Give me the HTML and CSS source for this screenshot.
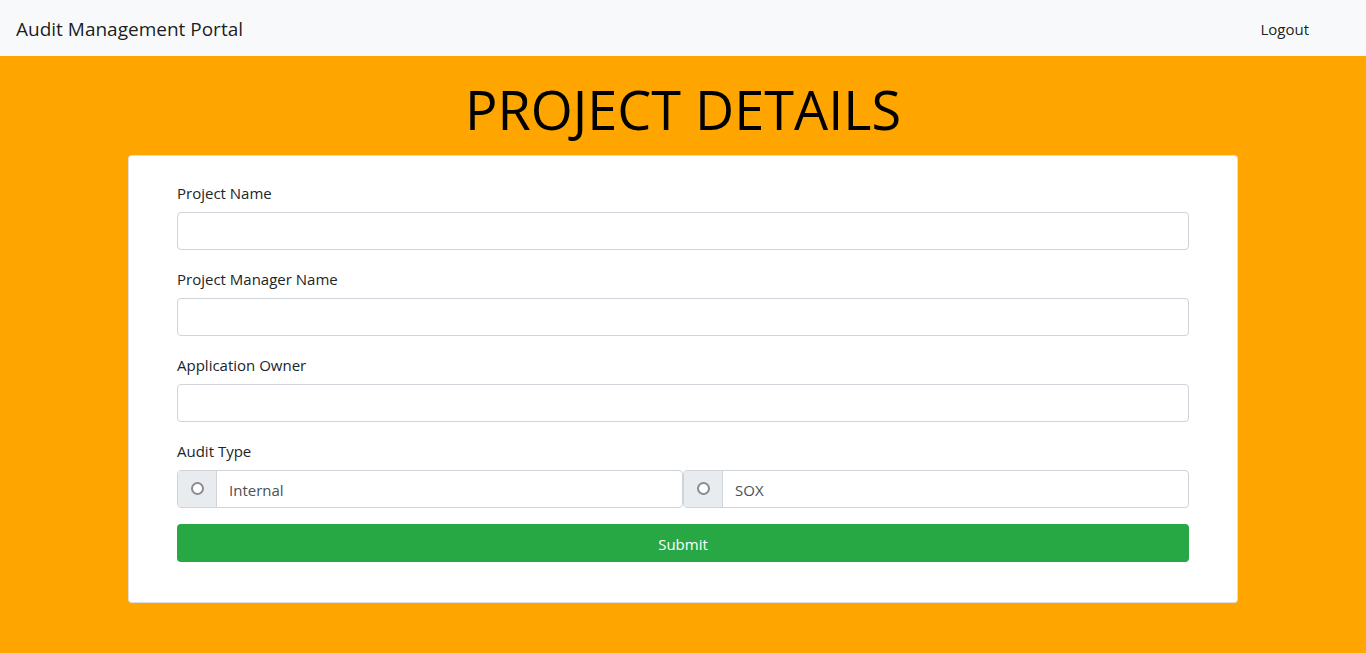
FILE: index.html
```html
<!DOCTYPE html>
<html lang="en">
<head>
<meta charset="utf-8">
<title>Audit Management Portal</title>
<link rel="stylesheet" href="styles.css">
</head>
<body>
<nav class="navbar">
  <a class="brand" href="#">Audit Management Portal</a>
  <a class="nav-link" href="#">Logout</a>
</nav>
<main class="page">
  <h1 class="title">PROJECT DETAILS</h1>
  <div class="card">
    <form class="form">
      <div class="form-group">
        <label class="label">Project Name</label>
        <input class="input" type="text">
      </div>
      <div class="form-group">
        <label class="label">Project Manager Name</label>
        <input class="input" type="text">
      </div>
      <div class="form-group">
        <label class="label">Application Owner</label>
        <input class="input" type="text">
      </div>
      <div class="form-group">
        <label class="label">Audit Type</label>
        <div class="input-group">
          <div class="option">
            <span class="prepend"><span class="radio"></span></span>
            <span class="option-text">Internal</span>
          </div>
          <div class="option">
            <span class="prepend"><span class="radio"></span></span>
            <span class="option-text">SOX</span>
          </div>
        </div>
      </div>
      <button class="submit" type="button">Submit</button>
    </form>
  </div>
</main>
</body>
</html>
```
FILE: styles.css
```css
* { box-sizing: border-box; }
html, body { margin: 0; padding: 0; }
body {
  font-family: "Open Sans", "Noto Sans", "Liberation Sans", sans-serif;
  font-size: 15px;
  color: #212529;
  background: #ffa500;
  min-height: 653px;
}
.navbar {
  height: 56px;
  background: #f8f9fa;
  display: flex;
  align-items: center;
  justify-content: space-between;
  padding: 2px 16px 0;
}
.brand {
  font-size: 19px;
  color: rgba(0,0,0,.9);
  text-decoration: none;
}
.nav-link {
  font-size: 15px;
  color: rgba(0,0,0,.9);
  text-decoration: none;
  margin-right: 41px;
}
.page {
  width: 1110px;
  margin: 0 auto;
  display: flex;
  flex-direction: column;
}
.title {
  margin: 17px 0 10px;
  font-size: 54px;
  font-weight: 400;
  line-height: 72px;
  text-align: center;
  color: #000;
}
.card {
  background: #fff;
  border: 1px solid rgba(0,0,0,.125);
  border-radius: 4px;
  padding: 24px 48px 40px;
}
.form { display: flex; flex-direction: column; }
.form-group { display: flex; flex-direction: column; margin-bottom: 16px; }
.label {
  line-height: 24px;
  padding-top: 1px;
  margin-bottom: 7px;
  color: #212529;
}
.input {
  height: 38px;
  border: 1px solid #ced4da;
  border-radius: 4px;
  background: #fff;
  font: inherit;
  padding: 6px 12px;
}
.input-group { display: flex; height: 38px; }
.option {
  flex: 1;
  display: flex;
  border: 1px solid #ced4da;
  border-radius: 4px;
  overflow: hidden;
}
.prepend {
  width: 39px;
  background: #e9ecef;
  border-right: 1px solid #ced4da;
  display: flex;
  align-items: center;
  justify-content: center;
  padding-bottom: 2px;
}
.radio {
  width: 13px;
  height: 13px;
  border: 2px solid #8a8a92;
  border-radius: 50%;
  background: #fff;
}
.option-text {
  display: flex;
  align-items: center;
  padding: 1px 12px 0;
  color: #495057;
}
.submit {
  height: 38px;
  border: none;
  border-radius: 4px;
  background: #28a745;
  color: #fff;
  font: inherit;
  padding-top: 2px;
}
```
